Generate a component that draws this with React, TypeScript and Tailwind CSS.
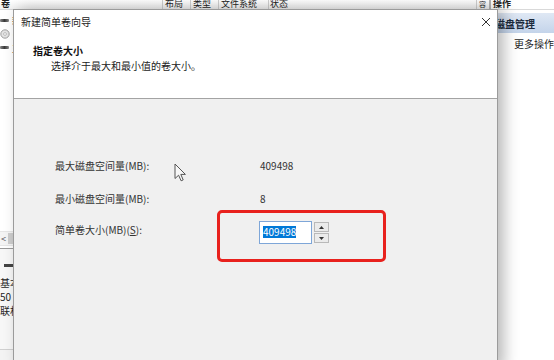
import React from 'react';

// 背景里的磁盘管理窗口（只露出左边一条和右边的操作栏）
const DriveIcon: React.FC = () => (
  <div className="h-[3px] w-[9px] rounded-[1px] bg-gradient-to-r from-[#8a8a8a] via-[#3a3a3a] to-[#8a8a8a]" />
);

const CdIcon: React.FC = () => (
  <svg width="10" height="10" viewBox="0 0 10 10">
    <circle cx="5" cy="5" r="4.2" fill="#e4e4e4" stroke="#8d8d8d" strokeWidth="0.8" />
    <circle cx="5" cy="5" r="1.4" fill="#fff" stroke="#9a9a9a" strokeWidth="0.6" />
  </svg>
);

const Cursor: React.FC = () => (
  <svg width="13" height="19" viewBox="0 0 13 19">
    <path
      d="M1 1 L1 15.5 L4.6 12.2 L7.1 17.8 L9.2 16.9 L6.8 11.4 L11.4 11.4 Z"
      fill="#f7f7f7"
      stroke="#555"
      strokeWidth="1"
      strokeLinejoin="round"
    />
  </svg>
);

const Background: React.FC = () => (
  <div className="flex h-full">
    <div className="flex w-[495px] flex-col border-r-2 border-[#b4b4b4]">
      {/* 列头 */}
      <div className="flex h-[10px] overflow-hidden whitespace-nowrap border-b border-[#d9d9d9] bg-gradient-to-b from-white to-[#f2f2f2] text-[9px] leading-[10px]">
        <div className="w-[163px] border-r border-[#cfcfcf] pl-[1px] -mt-[1px] font-bold">卷</div>
        <div className="w-[28px] border-r border-[#cfcfcf] pl-[2px] -mt-[1px]">布局</div>
        <div className="w-[28px] border-r border-[#cfcfcf] pl-[2px] -mt-[1px]">类型</div>
        <div className="w-[50px] border-r border-[#cfcfcf] pl-[2px] -mt-[1px]">文件系统</div>
        <div className="flex-1 border-r border-[#cfcfcf] pl-[1px] -mt-[1px]">状态</div>
        <div className="w-[12px] pl-[2px] -mt-[1px] text-[7px]">容</div>
      </div>
      {/* 卷列表 */}
      <div className="flex flex-col pt-[4px]">
        <div className="flex h-[13px] items-center gap-[3px]"><DriveIcon /><span>新</span></div>
        <div className="flex h-[13px] items-center gap-[3px]"><CdIcon /><span>c</span></div>
        <div className="flex h-[14px] items-center gap-[3px]"><DriveIcon /><span>主</span></div>
      </div>
      <div className="flex-1" />
      {/* 滚动条与磁盘区 */}
      <div className="flex h-[15px] items-center border-y border-[#e6e6e6] bg-[#f4f4f4] text-[9px] text-[#555]">
        <span className="w-[8px] pl-[1px]">&lt;</span>
        <div className="h-[11px] w-[6px] bg-[#cdcdcd]" />
      </div>
      <div className="h-[2px]" />
      <div className="h-[1px] bg-[#9a9a9a]" />
      <div className="flex h-[101px] flex-col bg-[#f7f7f7] pt-[15px]">
        <div className="ml-[4px] h-[3px] w-[9px] bg-[#444]" />
        <div className="mt-[9px] leading-[14px]">基本</div>
        <div className="leading-[14px]">50</div>
        <div className="leading-[14px]">联机</div>
        <div className="flex-1" />
        <div className="h-[1px] bg-[#d0d0d0]" />
      </div>
      <div className="h-[10px] bg-[#f3f3f3]" />
    </div>
    {/* 操作栏 */}
    <div className="flex flex-1 flex-col whitespace-nowrap">
      <div className="h-[10px] overflow-hidden border-b border-[#d9d9d9] pl-[2px] text-[9px] leading-[10px]">
        <div className="-mt-[1px] font-bold">操作</div>
      </div>
      <div className="mt-[3px] flex h-[20px] items-center bg-gradient-to-b from-[#dfe8f4] to-[#c4d4ea] pl-[4px] font-semibold text-[#1c2a3c]">
        磁盘管理
      </div>
      <div className="mt-[4px] pl-[23px] leading-[14px]">更多操作</div>
    </div>
  </div>
);

const Dialog: React.FC = () => (
  <div className="absolute left-[13px] top-[9px] flex h-[360px] w-[485px] flex-col border border-[#9b9b9b] bg-[#f0f0f0] shadow-[6px_0_14px_rgba(0,0,0,0.28)]">
    {/* 标题与说明 */}
    <div className="h-[89px] border-b border-[#a3a3a3] bg-white">
      <div className="flex h-[24px] items-center justify-between pl-[7px] pr-[6px]">
        <span className="leading-[14px] text-[#222]">新建简单卷向导</span>
        <svg width="10" height="10" viewBox="0 0 10 10">
          <path d="M1 1 L9 9 M9 1 L1 9" stroke="#333" strokeWidth="1" />
        </svg>
      </div>
      <div className="mt-[10px] pl-[19px] font-bold leading-[14px] text-[#111]">指定卷大小</div>
      <div className="mt-[1px] pl-[37px] leading-[14px] text-[#222]">选择介于最大和最小值的卷大小。</div>
    </div>

    {/* 主体 */}
    <div className="relative flex flex-col pl-[41px] pt-[52px] text-[#333]">
      <div className="flex h-[28px] items-center">
        <span className="w-[204px]">最大磁盘空间量(MB):</span>
        <span className="pl-[1px]">409498</span>
      </div>
      <div className="mt-[5px] flex h-[28px] items-center">
        <span className="w-[204px]">最小磁盘空间量(MB):</span>
        <span className="pl-[1px]">8</span>
      </div>
      <div className="mt-[9px] flex h-[23px] items-start">
        <span className="w-[204px] pt-[2px] leading-[14px]">
          简单卷大小(MB)(<span className="underline">S</span>):
        </span>
        <div className="flex items-start">
          <div className="h-[23px] w-[53px] border border-[#7ea6d8] bg-white pl-[3px] pt-[2px]">
            <span className="inline-block bg-[#0078d7] leading-[12px] text-white">409498</span>
          </div>
          <div className="ml-[2px] mt-[1px] flex w-[15px] flex-col gap-[1px]">
            <div className="flex h-[10px] items-center justify-center border border-[#b9b9b9] bg-[#ebebeb]">
              <svg width="5" height="3" viewBox="0 0 5 3"><path d="M0 3 L2.5 0 L5 3 Z" fill="#333" /></svg>
            </div>
            <div className="flex h-[10px] items-center justify-center border border-[#b9b9b9] bg-[#ebebeb]">
              <svg width="5" height="3" viewBox="0 0 5 3"><path d="M0 0 L2.5 3 L5 0 Z" fill="#333" /></svg>
            </div>
          </div>
        </div>
      </div>

      {/* 红色标注框 */}
      <div className="absolute left-[203px] top-[111px] h-[52px] w-[169px] rounded-[5px] border-[3px] border-[#e8211d]" />
      {/* 鼠标指针 */}
      <div className="absolute left-[160px] top-[64px]">
        <Cursor />
      </div>
    </div>
  </div>
);

export default function App() {
  return (
    <div className="relative h-[360px] w-[554px] overflow-hidden bg-white font-['Noto_Sans_CJK_SC',sans-serif] text-[10px] text-[#1e1e1e]">
      <Background />
      <Dialog />
    </div>
  );
}
